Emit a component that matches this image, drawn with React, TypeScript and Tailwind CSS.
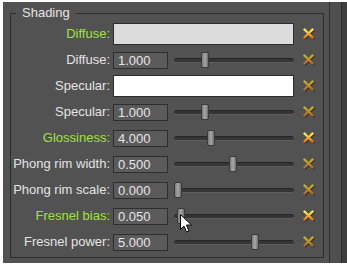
import React from "react";

type Row = {
  label: string;
  green?: boolean;
  color?: string;
  value?: string;
  thumb?: number;
};

const rows: Row[] = [
  { label: "Diffuse:", green: true, color: "#dcdcdc" },
  { label: "Diffuse:", value: "1.000", thumb: 27 },
  { label: "Specular:", color: "#ffffff" },
  { label: "Specular:", value: "1.000", thumb: 27 },
  { label: "Glossiness:", green: true, value: "4.000", thumb: 33 },
  { label: "Phong rim width:", value: "0.500", thumb: 55 },
  { label: "Phong rim scale:", value: "0.000", thumb: 0 },
  { label: "Fresnel bias:", green: true, value: "0.050", thumb: 3 },
  { label: "Fresnel power:", value: "5.000", thumb: 77 },
];

function ResetX({ bright }: { bright?: boolean }) {
  const id = bright ? "xb" : "xd";
  return (
    <svg width="12" height="12" viewBox="0 0 12 12" className="shrink-0">
      <defs>
        <linearGradient id={id} x1="0" y1="0" x2="0" y2="1">
          <stop offset="0" stopColor={bright ? "#fff04a" : "#c9b52a"} />
          <stop offset="1" stopColor={bright ? "#f07a10" : "#b86a1c"} />
        </linearGradient>
      </defs>
      <path d="M2.5 2.5 L10.5 10.5 M10.5 2.5 L2.5 10.5" stroke="#2a2a2a" strokeWidth="2.4" strokeLinecap="round" opacity="0.7" />
      <path d="M1.5 1.5 L9.5 9.5 M9.5 1.5 L1.5 9.5" stroke={`url(#${id})`} strokeWidth="2.4" strokeLinecap="round" />
    </svg>
  );
}

export default function App() {
  return (
    <div className="w-[347px] h-[268px] bg-white overflow-hidden relative" style={{ fontFamily: '"Liberation Sans", Arial, sans-serif' }}>
      <div className="ml-[3px] mt-[2px] h-[261px] flex bg-[#525252]">
        {/* main area */}
        <div className="w-[326px] pl-[7px] pt-[11px]">
          <div className="relative w-[314px] h-[245px] border border-[#2e2e2e] pt-[7px]">
            <span className="absolute left-[5px] top-[-9px] px-[6px] bg-[#525252] text-[13px] leading-[16px] text-[#e4e4e4]">
              Shading
            </span>
            {rows.map((r, i) => (
              <div key={i} className="h-[26px] flex items-center">
                <div className={`w-[99px] text-right text-[13px] leading-[16px] whitespace-nowrap ${r.green ? "text-[#9fe23a]" : "text-[#e4e4e4]"}`}>
                  {r.label}
                </div>
                {r.color ? (
                  <div className="ml-[3px] w-[181px] h-[22px] border border-[#2c2c2c]" style={{ background: r.color }} />
                ) : (
                  <>
                    <div className="ml-[3px] w-[55px] h-[17px] border border-[#2e2e2e] bg-[#5b5b5b] pl-[4px] text-[13px] leading-[15px] text-[#e6e6e6]">
                      {r.value}
                    </div>
                    <div className="ml-[6px] w-[120px] h-[16px] relative flex items-center">
                      <div className="w-full h-[5px] rounded-full bg-[#353535] border-t border-[#262626] border-b border-b-[#5e5e5e]" />
                      <div
                        className="absolute top-0 w-[8px] h-[16px] rounded-[2px] border border-[#3a3a3a] bg-gradient-to-r from-[#7a7a7a] via-[#a8a8a8] to-[#6e6e6e]"
                        style={{ left: r.thumb }}
                      />
                    </div>
                  </>
                )}
                <div className="ml-[9px]">
                  <ResetX bright={r.green} />
                </div>
              </div>
            ))}
          </div>
        </div>
        {/* side strip */}
        <div className="w-[12px] border-l border-[#2e2e2e] bg-[#4f4f4f]" />
        <div className="w-[6px] border-l border-[#2a2a2a] bg-[#3e3e3e]" />
      </div>
      {/* mouse cursor */}
      <svg className="absolute left-[180px] top-[214px]" width="13" height="20" viewBox="0 0 13 20">
        <path d="M0.5 0.5 L0.5 15.5 L4 12 L6.5 18 L9 17 L6.5 11 L11.5 11 Z" fill="#ffffff" stroke="#000000" strokeWidth="1" />
      </svg>
    </div>
  );
}
